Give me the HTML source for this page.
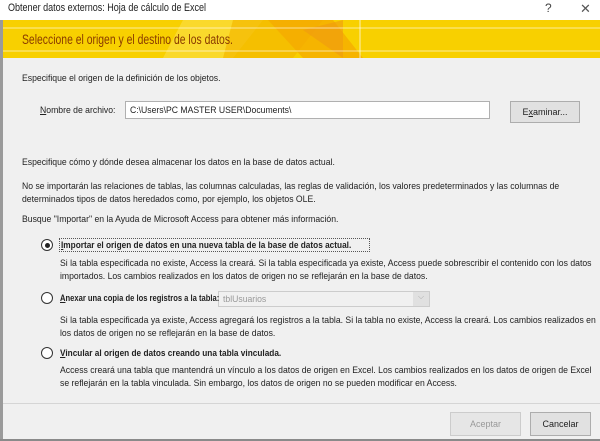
<!DOCTYPE html>
<html><head><meta charset="utf-8"><style>
*{margin:0;padding:0;box-sizing:border-box}
body{width:600px;height:441px;overflow:hidden;background:#f0f0f0;font-family:"Liberation Sans",sans-serif;font-size:9.5px;color:#222;position:relative}
.a{position:absolute;white-space:nowrap}
.s{transform:scaleX(.91);transform-origin:0 0}
.sb{transform:scaleX(.87);transform-origin:0 0}
.title{left:0;top:0;width:600px;height:20px;background:#fff}
.banner{left:3px;top:20px;width:597px;height:38px;background:#f8d000;overflow:hidden}
.rad{position:absolute;width:12px;height:12px;border:1px solid #333;border-radius:50%;background:#fff}
.btn{position:absolute;border:1px solid #adadad;background:#e1e1e1;text-align:center;font-size:9px}
b{font-weight:bold}
</style></head><body>
<div class="a" style="left:0;top:0;width:3px;height:441px;background:#9a9a9a"></div>
<div class="a title"></div>
<div class="a" style="left:8px;top:2px;font-size:11px;color:#222;transform:scaleX(.82);transform-origin:0 0">Obtener datos externos: Hoja de cálculo de Excel</div>
<div class="a" style="left:545px;top:1px;font-size:12px;color:#444">?</div>
<div class="a" style="left:580px;top:1px;font-size:13px;color:#555">✕</div>
<div class="a banner">
<svg width="597" height="38" style="position:absolute;left:0;top:0">
<polygon points="180,0 260,0 230,38 160,38" fill="#fbe04a" opacity=".6"/>
<polygon points="230,0 320,0 290,38 220,38" fill="#f3b800" opacity=".7"/>
<polygon points="265,0 330,0 360,38 300,38" fill="#f5a800" opacity=".7"/>
<polygon points="300,10 340,0 340,38" fill="#f09a10" opacity=".6"/>
<line x1="0" y1="8" x2="597" y2="8" stroke="#fff" stroke-opacity=".6"/>
<line x1="0" y1="31" x2="597" y2="31" stroke="#fff" stroke-opacity=".6"/>
<line x1="357" y1="0" x2="357" y2="38" stroke="#fff" stroke-opacity=".7"/>
</svg>
<div class="a" style="left:19px;top:12px;font-size:13.5px;color:#8a3b00;transform:scaleX(.77);transform-origin:0 0">Seleccione el origen y el destino de los datos.</div>
</div>
<div class="a s" style="left:22px;top:73px">Especifique el origen de la definición de los objetos.</div>
<div class="a s" style="left:40px;top:105px"><u>N</u>ombre de archivo:</div>
<div class="a" style="left:125px;top:101px;width:365px;height:18px;background:#fff;border:1px solid #b0b0b0"></div>
<div class="a s" style="left:130px;top:105px">C:\Users\PC MASTER USER\Documents\</div>
<div class="btn" style="left:510px;top:101px;width:70px;height:22px;line-height:20px">E<u>x</u>aminar...</div>
<div class="a s" style="left:22px;top:157px">Especifique cómo y dónde desea almacenar los datos en la base de datos actual.</div>
<div class="a s" style="left:22px;top:180px;line-height:13px">No se importarán las relaciones de tablas, las columnas calculadas, las reglas de validación, los valores predeterminados y las columnas de<br>determinados tipos de datos heredados como, por ejemplo, los objetos OLE.</div>
<div class="a s" style="left:22px;top:214px">Busque "Importar" en la Ayuda de Microsoft Access para obtener más información.</div>
<div class="rad" style="left:41px;top:239px"><div style="width:5px;height:5px;background:#222;border-radius:50%;margin:2.5px"></div></div>
<div class="a" style="left:59px;top:238px;width:311px;height:14px;border:1px dotted #555"></div>
<div class="a sb" style="left:61px;top:240px"><b><u>I</u>mportar el origen de datos en una nueva tabla de la base de datos actual.</b></div>
<div class="a s" style="left:60px;top:257px;line-height:13px">Si la tabla especificada no existe, Access la creará. Si la tabla especificada ya existe, Access puede sobrescribir el contenido con los datos<br>importados. Los cambios realizados en los datos de origen no se reflejarán en la base de datos.</div>
<div class="rad" style="left:41px;top:292px"></div>
<div class="a" style="left:218px;top:291px;width:212px;height:16px;background:#f0f0f0;border:1px solid #ccc"></div>
<div class="a" style="left:60px;top:293px;transform:scaleX(.8);transform-origin:0 0"><b><u>A</u>nexar una copia de los registros a la tabla:</b></div>
<div class="a s" style="left:223px;top:294px;color:#999">tblUsuarios</div>
<div class="a" style="left:413px;top:292px;width:16px;height:14px;background:#e0e0e0;color:#aaa;font-size:8px;text-align:center">⌵</div>
<div class="a s" style="left:60px;top:314px;line-height:13px">Si la tabla especificada ya existe, Access agregará los registros a la tabla. Si la tabla no existe, Access la creará. Los cambios realizados en<br>los datos de origen no se reflejarán en la base de datos.</div>
<div class="rad" style="left:41px;top:347px"></div>
<div class="a sb" style="left:60px;top:348px"><b><u>V</u>incular al origen de datos creando una tabla vinculada.</b></div>
<div class="a s" style="left:60px;top:364px;line-height:13px">Access creará una tabla que mantendrá un vínculo a los datos de origen en Excel. Los cambios realizados en los datos de origen de Excel<br>se reflejarán en la tabla vinculada. Sin embargo, los datos de origen no se pueden modificar en Access.</div>
<div class="a" style="left:3px;top:403px;width:597px;height:1px;background:#d5d5d5"></div>
<div class="btn" style="left:450px;top:412px;width:71px;height:24px;line-height:22px;color:#999;border-color:#ccc;background:#e6e6e6">Aceptar</div>
<div class="btn" style="left:530px;top:412px;width:61px;height:24px;line-height:22px">Cancelar</div>
<div class="a" style="left:0;top:439px;width:600px;height:2px;background:#8a8a8a"></div>
</body></html>
